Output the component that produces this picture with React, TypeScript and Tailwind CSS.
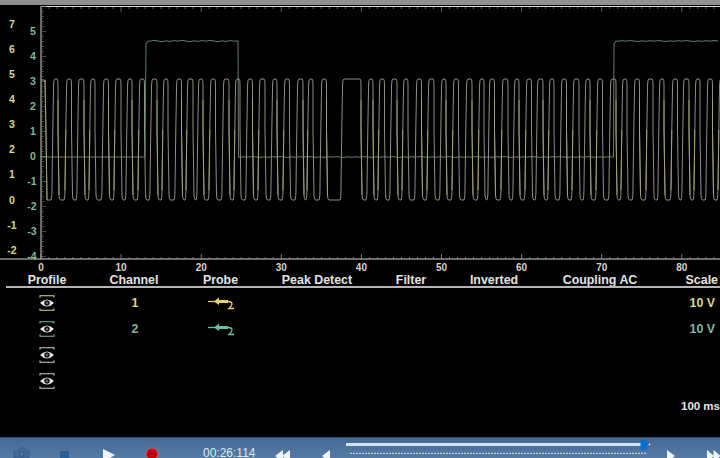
import React from "react";

const rises = [53,66,78,90,103,115,127,139,151,163,176,187,198,210,223,235,247,259,272,284,297,308,321,342,368,379,391,403,416,428,441,453,466,479,489,502,514,526,537,549,561,573,585,597,610,622,634,647,659,672,683,695,707,719];

const pulseWidth = (r: number, i: number) => (r === 342 ? 19 : 5 + ((i * 7) % 3) * 0.5);

function pulsePath() {
  let d = "M41 80 L45 80 L46 130 L47 200 L50 200";
  rises.forEach((r, i) => {
    const hi = pulseWidth(r, i);
    d += ` L${r - 2} 200 Q${r - 1} 199 ${r - 1} 185 L${r - 0.2} 130 L${r + 0.6} 84 Q${r + 1} 79 ${r + 2} 79 L${r + hi - 1} 79 Q${r + hi} 79 ${r + hi} 85 L${r + hi} 130 L${r + hi + 1} 195 Q${r + hi + 1.2} 200 ${r + hi + 2.5} 200`;
  });
  return d;
}

function fallingPath() {
  let d = "M45 80 L47 200";
  rises.forEach((r, i) => {
    const hi = pulseWidth(r, i);
    if (i % 2 === 0 || r === 342) d += ` M${r + hi} 100 L${r + hi} 130 L${r + hi + 1} 195`;
    else d += ` M${r - 1} 190 L${r - 0.2} 130`;
  });
  return d;
}

function wobble(from: number, to: number, y: number, amp: number) {
  let d = "";
  for (let x = from; x <= to; x += 4) {
    d += ` L${x} ${y + (((x * 13) % 7) / 6 - 0.5) * amp}`;
  }
  return d;
}

const greenPath =
  "M41 157 L145 157 L146 44 L148 41" +
  wobble(150, 236, 41, 1.2) +
  " L238 41 L238.5 157" +
  wobble(240, 612, 157, 0.7) +
  " L613.5 157 L614 44 L616 41" +
  wobble(618, 720, 41, 1);

const yLeft = ["7", "6", "5", "4", "3", "2", "1", "0", "-1", "-2"];
const yRight = ["5", "4", "3", "2", "1", "0", "-1", "-2", "-3", "-4"];

function Chart() {
  return (
    <svg width={720} height={269} viewBox="0 5 720 269" className="block shrink-0" style={{ fontFamily: "'Liberation Sans', sans-serif" }}>
      <line x1={41} y1={6.5} x2={720} y2={6.5} stroke="#dcdcdc" strokeWidth={1} />
      <line x1={41} y1={6} x2={41} y2={259} stroke="#c9d4c8" strokeWidth={1} />
      <line x1={0} y1={259} x2={720} y2={259} stroke="#d8d8d8" strokeWidth={1} />
      {Array.from({ length: 101 }, (_, i) => (
        <line key={i} x1={41} y1={6.5 + i * 2.5} x2={i % 10 === 0 ? 46 : i % 2 === 0 ? 44 : 43} y2={6.5 + i * 2.5} stroke="#6f7a70" strokeWidth={0.6} />
      ))}
      {Array.from({ length: 85 }, (_, i) => {
        const x = 41 + i * 8.01;
        return (
          <g key={i}>
            <line x1={x} y1={7} x2={x} y2={i % 10 === 0 ? 12 : 9} stroke="#777777" strokeWidth={0.8} />
            <line x1={x} y1={259} x2={x} y2={i % 10 === 0 ? 254 : 257} stroke="#999999" strokeWidth={0.8} />
          </g>
        );
      })}
      <path d={pulsePath()} fill="none" stroke="#b4b3a2" strokeWidth={0.8} />
      <path d={fallingPath()} fill="none" stroke="#aaa968" strokeWidth={0.8} />
      <path d={greenPath} fill="none" stroke="#7c9f8a" strokeWidth={0.8} />
      {yLeft.map((t, i) => (
        <text key={t} x={12} y={27.8 + i * 25.1} textAnchor="middle" fontSize={10.5} fontWeight={700} fill="#d6d68a">{t}</text>
      ))}
      {yRight.map((t, i) => (
        <text key={t} x={i > 5 ? 32 : 33} y={34.8 + i * 25} textAnchor="middle" fontSize={10.5} fontWeight={700} fill="#7fb89e">{t}</text>
      ))}
      {[0, 10, 20, 30, 40, 50, 60, 70, 80].map((t, i) => (
        <text key={t} x={41 + i * 80.1} y={271} textAnchor="middle" fontSize={10} fontWeight={700} fill="#d4d4d4">{t}</text>
      ))}
    </svg>
  );
}

function Eye({ color = "#d0d0d0" }: { color?: string }) {
  return (
    <svg width={16} height={16} viewBox="0 0 16 16" className="block">
      <path d="M1 2.5V0.8H15V2.5M1 13.5V15.2H15V13.5" fill="none" stroke={color} strokeWidth={1.1} />
      <path d="M1 8Q8 1 15 8Q8 15 1 8Z" fill="#ececec" />
      <circle cx={8} cy={8} r={2.8} fill="#1c1c1c" />
      <circle cx={8} cy={8} r={0.9} fill="#8a8a8a" />
    </svg>
  );
}

function Probe({ color }: { color: string }) {
  return (
    <svg width={28} height={14} viewBox="0 0 28 14" className="block">
      <path d="M1 5.5H9" fill="none" stroke={color} strokeWidth={1.3} />
      <path d="M7 5.5L12 1.5V4H21V7H12V9Z" fill={color} />
      <path d="M21 5.5Q25 5.5 25 8Q25 10 22 12.5H27" fill="none" stroke={color} strokeWidth={1.3} />
    </svg>
  );
}

const cols = "grid grid-cols-[94px_80px_93px_100px_88px_78px_134px_53px]";

function Row({ eye, ch, chColor, probe, scale }: { eye?: string; ch?: string; chColor?: string; probe?: string; scale?: string }) {
  return (
    <div className={`${cols} h-[26px] items-center`}>
      <div className="flex justify-center"><Eye color={eye} /></div>
      <div className={`pl-[2px] text-center text-[12.4px] font-bold ${chColor ?? ""}`}>{ch}</div>
      <div className="flex justify-center">{probe && <Probe color={probe} />}</div>
      <div /><div /><div /><div />
      <div className={`whitespace-nowrap pr-[5px] text-right text-[12.4px] font-bold ${chColor ?? ""}`}>{scale}</div>
    </div>
  );
}

export default function App() {
  return (
    <div className="flex h-[458px] w-[720px] flex-col overflow-hidden bg-black text-white" style={{ fontFamily: "'Liberation Sans', Arial, sans-serif" }}>
      <div className="h-[5px] shrink-0 bg-[#8f8f8f]" />
      <Chart />
      <div className={`${cols} h-[12px] items-center whitespace-nowrap text-[12.4px] font-bold leading-none text-[#e4e4e4]`}>
        <div className="text-center">Profile</div>
        <div className="text-center">Channel</div>
        <div className="text-center">Probe</div>
        <div className="text-center">Peak Detect</div>
        <div className="text-center">Filter</div>
        <div className="text-center">Inverted</div>
        <div className="text-center">Coupling AC</div>
        <div className="pr-[2px] text-right">Scale</div>
      </div>
      <div className="ml-[6px] h-[2px] shrink-0 bg-[#b5b5b5]" />
      <div className="mt-[2px] flex flex-col">
        <Row eye="#d8d58e" ch="1" chColor="text-[#d9d68f]" probe="#e8cf7d" scale="10 V" />
        <Row eye="#7fb89e" ch="2" chColor="text-[#7fb89e]" probe="#6fc0a0" scale="10 V" />
        <Row />
        <Row />
      </div>
      <div className="mt-[7px] whitespace-nowrap text-right text-[11.5px] font-bold leading-none text-[#e4e4e4]">100 ms</div>
      <div className="mt-auto h-[21px] shrink-0 border-t border-[#2a4a70] bg-[linear-gradient(#466a93,#557aa3)]">
        <svg width={720} height={20} viewBox="0 0 720 20" className="block">
          <path d="M14 13H18L20 10H24L26 13H29V20H14Z" fill="#44699a" stroke="#365c8a" />
          <circle cx={21.5} cy={16} r={2.5} fill="#4f7399" stroke="#2f557f" />
          <rect x={60} y={13} width={9} height={8} fill="#2a5e92" />
          <path d="M103 11L115 17L103 24Z" fill="#f0f4f8" />
          <circle cx={152} cy={16} r={6} fill="#c00010" stroke="#d98b80" strokeWidth={0.6} />
          <text x={203} y={19} fontSize={12} fill="#dfe7f0" style={{ fontFamily: "'Liberation Sans', sans-serif" }}>00:26:114</text>
          <path d="M275 18L283 12V24ZM282 18L290 12V24Z" fill="#f0f4f8" />
          <path d="M322 18L330 12V24Z" fill="#f0f4f8" />
          <rect x={346} y={5} width={296} height={3} fill="#cfe4f0" />
          <line x1={350} y1={15.3} x2={646} y2={15.3} stroke="#d6e0ea" strokeWidth={1.2} strokeDasharray="2 1" opacity={0.85} />
          <rect x={640.5} y={2} width={7} height={10} rx={1} fill="#0a6fd0" />
          <circle cx={649.5} cy={6.5} r={0.8} fill="#ffffff" />
          <path d="M667 12L675 18L667 24Z" fill="#f0f4f8" />
          <path d="M707 12L714 18L707 24ZM713.5 12L720.5 18L713.5 24Z" fill="#f0f4f8" />
        </svg>
      </div>
    </div>
  );
}
